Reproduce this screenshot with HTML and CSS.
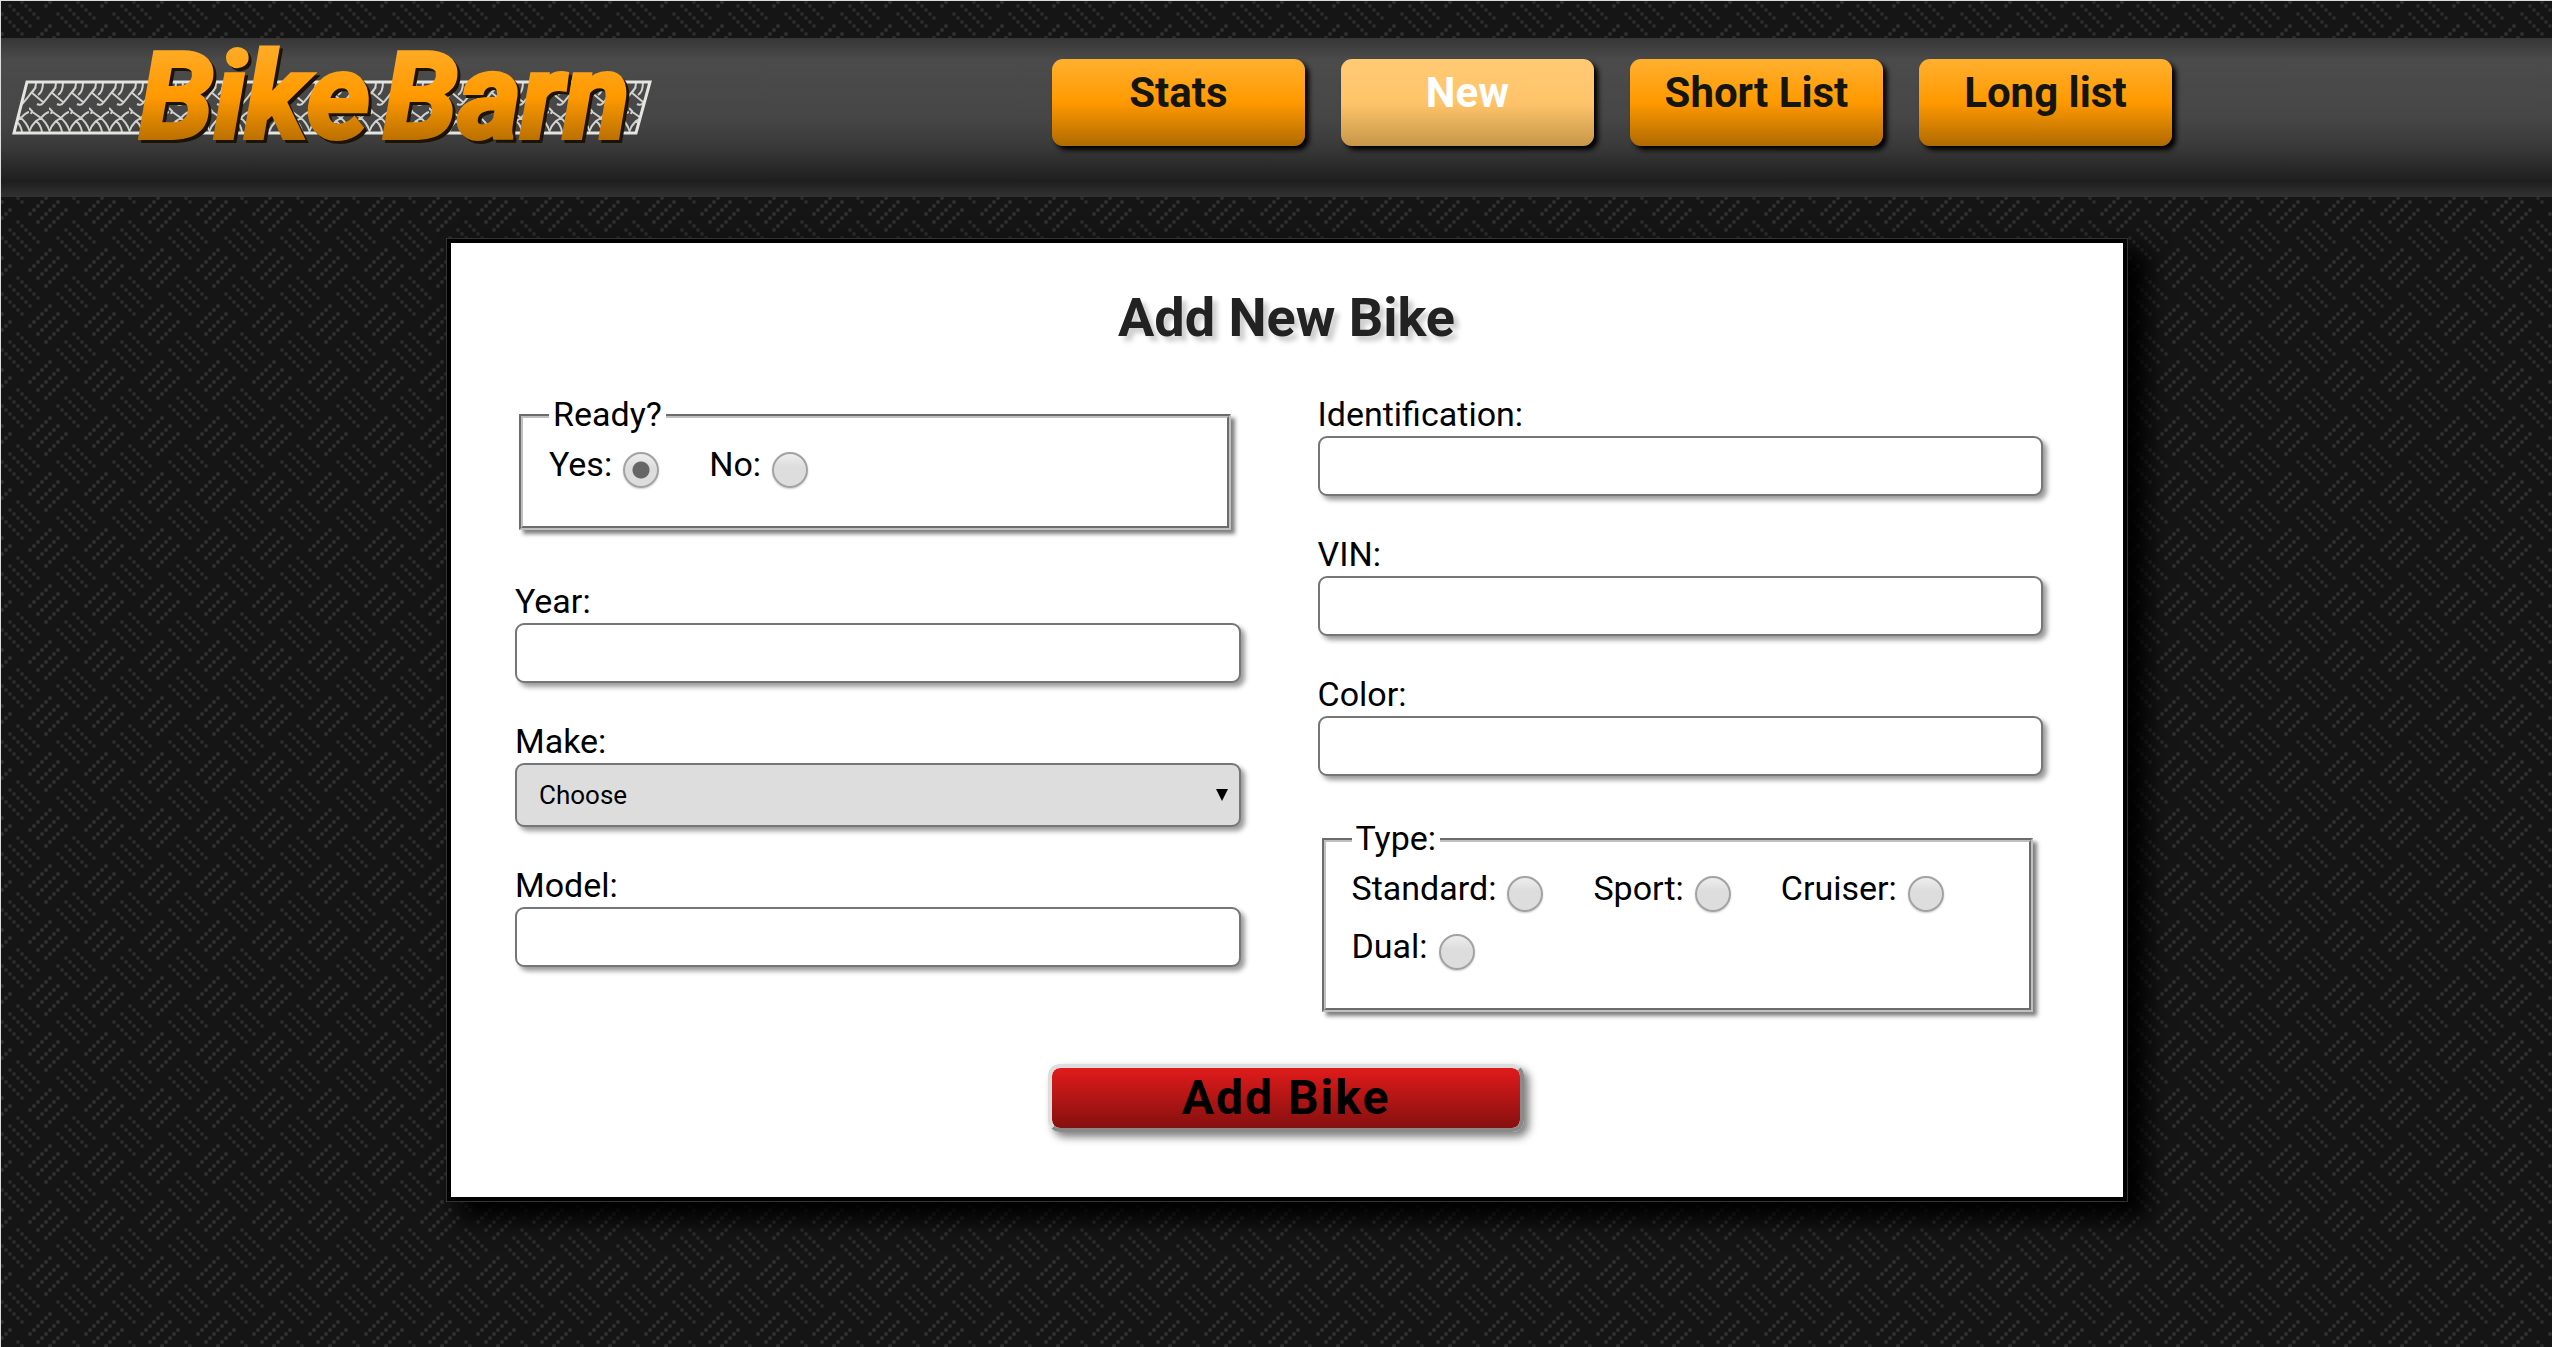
FILE: index.html
```html
<!DOCTYPE html>
<html lang="en">
<head>
<meta charset="utf-8">
<title>Bike Barn</title>
<link rel="stylesheet" href="styles.css">
</head>
<body>
<header class="site-header">
  <a class="logo" href="#" aria-label="Bike Barn">
    <svg class="logo-art" viewBox="0 0 640 110" width="640" height="110">
      <defs>
        <linearGradient id="amber" x1="0" y1="0" x2="0" y2="1">
          <stop offset="0.15" stop-color="#ffab26"/>
          <stop offset="0.5" stop-color="#ff9900"/>
          <stop offset="0.85" stop-color="#b06a00"/>
        </linearGradient>
        <pattern id="tread" width="20" height="50" patternUnits="userSpaceOnUse" x="16" y="44">
          <g fill="none" stroke="#d0d0cc" stroke-width="2">
            <path d="M8 22q4 2 6-1l6-7M-12 22q4 2 6-1L7 5M14 20L2 10M14 0q0 10-5 13M7 0q0 8-5 11M20 14l7-12"/>
            <path d="M0 26l3 3-1 3M2 29l10 7q6 5 9 14M12 36l-5 3q-5 5-7 11M7 39q5 4 6 11M-13 39l7-3q-6-6-12-7M12 36q4-5 8-6"/>
          </g>
        </pattern>
      </defs>
      <path d="M14 44H637L623 95H1Z" fill="url(#tread)" stroke="#e4e4e0" stroke-width="3"/>
      <g class="logo-word logo-shade">
        <text x="129" y="103">Bike</text>
        <text x="373" y="103">Barn</text>
      </g>
      <g class="logo-word">
        <text x="126" y="100">Bike</text>
        <text x="370" y="100">Barn</text>
      </g>
    </svg>
  </a>
  <nav class="nav">
    <a class="nav-link" href="#">Stats</a>
    <a class="nav-link nav-current" href="#">New</a>
    <a class="nav-link" href="#">Short List</a>
    <a class="nav-link" href="#">Long list</a>
  </nav>
</header>
<main class="card">
  <h1 class="title">Add New Bike</h1>
  <form class="form">
    <div class="columns">
      <div class="column">
        <fieldset class="group">
          <legend>Ready?</legend>
          <div class="options">
            <span class="option"><label for="yes">Yes:</label><input type="radio" name="ready" id="yes" checked></span>
            <span class="option"><label for="no">No:</label><input type="radio" name="ready" id="no"></span>
          </div>
        </fieldset>
        <div class="field"><label for="year">Year:</label><input type="text" id="year"></div>
        <div class="field"><label for="make">Make:</label>
          <span class="picker"><select id="make"><option>Choose</option></select></span></div>
        <div class="field"><label for="model">Model:</label><input type="text" id="model"></div>
      </div>
      <div class="column">
        <div class="field"><label for="ident">Identification:</label><input type="text" id="ident"></div>
        <div class="field"><label for="vin">VIN:</label><input type="text" id="vin"></div>
        <div class="field"><label for="color">Color:</label><input type="text" id="color"></div>
        <fieldset class="group">
          <legend>Type:</legend>
          <div class="options">
            <span class="option"><label for="standard">Standard:</label><input type="radio" name="type" id="standard"></span>
            <span class="option"><label for="sport">Sport:</label><input type="radio" name="type" id="sport"></span>
            <span class="option"><label for="cruiser">Cruiser:</label><input type="radio" name="type" id="cruiser"></span>
            <span class="option"><label for="dual">Dual:</label><input type="radio" name="type" id="dual"></span>
          </div>
        </fieldset>
      </div>
    </div>
    <button class="submit" type="button">Add Bike</button>
  </form>
</main>
</body>
</html>
```
FILE: styles.css
```css
* { box-sizing: border-box; }

body {
  margin: 0;
  min-height: 100vh;
  padding-top: 37px;
  border: 1px solid #ddd;
  border-width: 1px 0 0 1px;
  font-family: Roboto, "Liberation Sans", sans-serif;
  font-size: 34px;
  line-height: 40px;
  color: #000;
  background: #151515 url("data:image/svg+xml,%3Csvg xmlns='http://www.w3.org/2000/svg' width='56' height='56'%3E%3Cg fill='none' stroke='%232f2f2f' stroke-width='4' stroke-linecap='round' stroke-dasharray='0 5.657'%3E%3Cpath d='M30 46l21-21M38 54l21-21M46 62l21-21M-18 54l21-21M-10 62l21-21M38 -2l21-21M46 6l21-21M-10 6l21-21'/%3E%3Cpath stroke='%232a2a2a' d='M18 54l21 21M18 -2l21 21M10 6l21 21M2 14l21 21'/%3E%3C/g%3E%3C/svg%3E");
}

.site-header {
  display: grid;
  grid-template-columns: 41% 1fr;
  align-items: start;
  height: 159px;
  background: linear-gradient(#363636, #4b4b4b 14%, #464646 50%, #3a3a3a 68%, #1e1e1e 90%, #323232);
}
.logo { padding-left: 12px; }
.logo-art { display: block; overflow: visible; }
.logo-word {
  font: italic bold 121px Roboto, "Liberation Sans", sans-serif;
  fill: url(#amber);
  stroke: url(#amber);
  stroke-width: 4px;
}
.logo-shade { fill: #1c1305; stroke: #1c1305; }

.nav { display: flex; gap: 36px; padding: 21px 0 0 5px; }
.nav-link {
  width: 253px;
  height: 87px;
  padding-top: 14px;
  border-radius: 11px;
  background: linear-gradient(#ffb030, #ff9900 50%, #b06a00);
  box-shadow: 4px 4px 5px #000;
  color: #151510;
  font-size: 42px;
  font-weight: bold;
  text-align: center;
  text-decoration: none;
}
.nav-current {
  background: linear-gradient(#ffca74, #ffc46a 50%, #c69749);
  color: #fff;
}

.card {
  width: 1680px;
  max-width: 100%;
  margin: 42px auto 0 446px;
  padding: 42px 80px 65px 64px;
  border: 4px solid #000;
  outline: 1px solid #333;
  background: #fff;
  box-shadow: 16px 14px 22px 4px #000;
}
.title {
  margin: 0;
  padding-left: 15px;
  color: #222;
  font-size: 54px;
  line-height: 66px;
  text-align: center;
  text-shadow: 5px 5px 5px rgba(0, 0, 0, .2);
}
.form { display: flex; flex-direction: column; align-items: center; padding-top: 43px; }
.columns { display: grid; grid-template-columns: 1fr 1fr; gap: 77px; width: 100%; }
.column { display: flex; flex-direction: column; gap: 38px; }
.field { display: flex; flex-direction: column; gap: 2px; }
.field label { align-self: flex-start; line-height: 40px; }
.field input, .picker select {
  width: 100%;
  height: 60px;
  margin: 0;
  padding: 0 22px;
  border: 2px solid #767676;
  border-radius: 9px;
  background: #fff;
  box-shadow: 4px 4px 5px rgba(0, 0, 0, .4);
  font: 26px/30px Roboto, "Liberation Sans", sans-serif;
  color: #000;
}
.picker { display: grid; align-items: center; }
.picker select { grid-area: 1 / 1; height: 64px; appearance: none; background: #ddd; }
.picker::after {
  content: "";
  grid-area: 1 / 1;
  justify-self: end;
  margin-right: 13px;
  border: 6px solid transparent;
  border-top: 12px solid #000;
  border-bottom: 0;
  pointer-events: none;
}

.group {
  min-width: 0;
  margin: 0 10px 13px 4px;
  padding: 4px 26px 40px;
  border: 4px groove #c0c0c0;
  box-shadow: 4px 4px 4px rgba(0, 0, 0, .5);
}
.field + .group { margin-top: 4px; }
.group legend { padding: 0 4px 4px; line-height: 40px; }
.options { display: flex; flex-wrap: wrap; gap: 14px 50px; }
.option { display: flex; align-items: center; gap: 11px; height: 44px; }
.option input {
  appearance: none;
  width: 36px;
  height: 36px;
  margin: 12px 0 0;
  border: 2px solid #a2a2a2;
  border-radius: 50%;
  background: linear-gradient(#eee, #ddd 40%);
  box-shadow: 0 1px 2px rgba(0, 0, 0, .2);
}
.option input:checked { background: radial-gradient(circle, #666 8px, transparent 9px), linear-gradient(#eee, #ddd 40%); }

.submit {
  width: 476px;
  height: 68px;
  margin: 39px 0 0 14px;
  padding: 0;
  border: 4px outset #ddd;
  border-radius: 12px;
  background: linear-gradient(#e01b1b, #85100f) padding-box;
  box-shadow: 5px 5px 8px rgba(0, 0, 0, .5);
  color: #000;
  font: bold 48px/54px Roboto, "Liberation Sans", sans-serif;
  letter-spacing: 2px;
}
```
